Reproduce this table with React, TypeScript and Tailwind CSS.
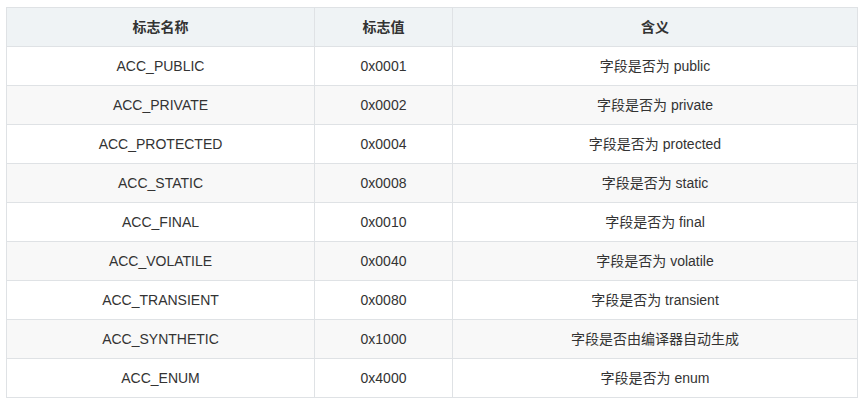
const rows: [string, string, string][] = [
  ['ACC_PUBLIC', '0x0001', '字段是否为 public'],
  ['ACC_PRIVATE', '0x0002', '字段是否为 private'],
  ['ACC_PROTECTED', '0x0004', '字段是否为 protected'],
  ['ACC_STATIC', '0x0008', '字段是否为 static'],
  ['ACC_FINAL', '0x0010', '字段是否为 final'],
  ['ACC_VOLATILE', '0x0040', '字段是否为 volatile'],
  ['ACC_TRANSIENT', '0x0080', '字段是否为 transient'],
  ['ACC_SYNTHETIC', '0x1000', '字段是否由编译器自动生成'],
  ['ACC_ENUM', '0x4000', '字段是否为 enum'],
];

export default function App() {
  return (
    <div className="w-[862px] h-[405px] bg-white pl-[6px] pt-[7px] font-['Liberation_Sans','Noto_Sans_CJK_SC',sans-serif] text-[14px] text-[#333]">
      <table className="w-[852px] border-collapse table-fixed">
        <colgroup>
          <col className="w-[308px]" />
          <col className="w-[138px]" />
          <col />
        </colgroup>
        <thead>
          <tr className="h-[39px] bg-[#eff3f5]">
            <th className="border border-[#dfe2e5] font-bold text-center">标志名称</th>
            <th className="border border-[#dfe2e5] font-bold text-center">标志值</th>
            <th className="border border-[#dfe2e5] font-bold text-center">含义</th>
          </tr>
        </thead>
        <tbody>
          {rows.map(([name, value, meaning], i) => (
            <tr key={name} className={`h-[39px] ${i % 2 === 1 ? 'bg-[#f8f8f8]' : 'bg-white'}`}>
              <td className="border border-[#dfe2e5] text-center">{name}</td>
              <td className="border border-[#dfe2e5] text-center">{value}</td>
              <td className="border border-[#dfe2e5] text-center">{meaning}</td>
            </tr>
          ))}
        </tbody>
      </table>
    </div>
  );
}
